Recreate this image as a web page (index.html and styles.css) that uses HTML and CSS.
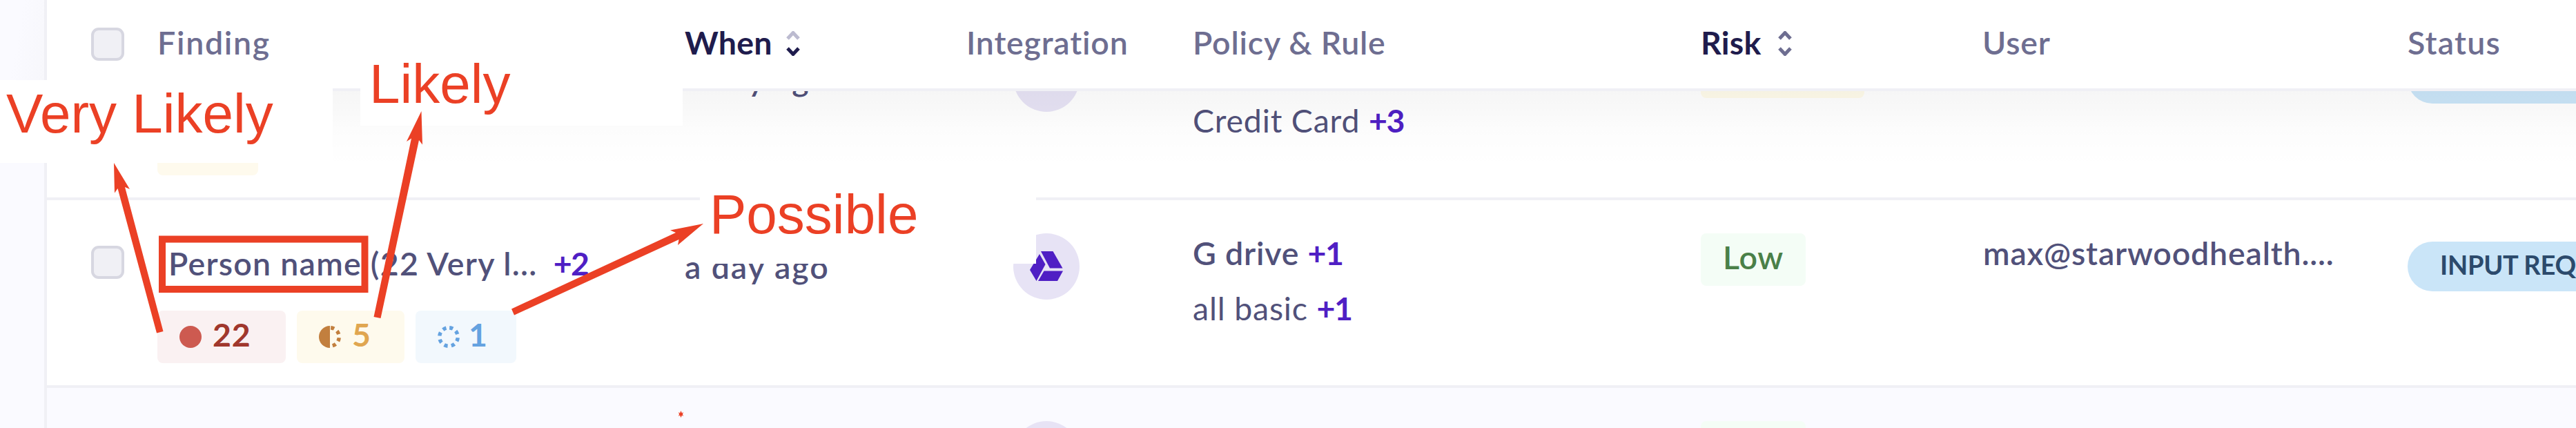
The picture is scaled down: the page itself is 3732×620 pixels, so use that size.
FILE: index.html
```html
<!DOCTYPE html>
<html lang="en">
<head>
<meta charset="utf-8">
<title>Findings</title>
<link rel="stylesheet" href="styles.css">
</head>
<body>
<div class="page">
  <aside class="rail"></aside>
  <main class="table">
    <header class="grid head">
      <span class="check"></span>
      <span class="th th-finding">Finding</span>
      <span class="th th-active">When
        <svg class="sort" viewBox="0 0 20 36"><path class="dim" d="M2 11 10 2.500 18 11"/><path class="dark" d="M2 25 10 33.500 18 25"/></svg>
      </span>
      <span class="th">Integration</span>
      <span class="th">Policy &amp; Rule</span>
      <span class="th th-active th-risk">Risk
        <svg class="sort" viewBox="0 0 20 36"><path d="M2 11 10 2.500 18 11"/><path d="M2 25 10 33.500 18 25"/></svg>
      </span>
      <span class="th">User</span>
      <span class="th th-status">Status</span>
    </header>
    <div class="shade"></div>
    <section class="rows">
      <div class="grid row">
        <span></span>
        <div class="finding">
          <div class="title"></div>
          <div class="tags"><span class="tag tag-likely tag-blank"></span></div>
        </div>
        <div class="when">a day ago</div>
        <div class="integration"><span class="disc"></span></div>
        <div class="policy"><div class="rule-name"></div><div class="rule">Credit Card <b>+3</b></div></div>
        <div><span class="risk risk-medium"></span></div>
        <div></div>
        <div><span class="pill"></span></div>
      </div>
      <div class="grid row">
        <span class="check"></span>
        <div class="finding">
          <div class="title"><span class="name">Person name (22 Very l...</span><b>+2</b></div>
          <div class="tags">
            <span class="tag tag-very"><svg class="dot" viewBox="-16 -16 32 32"><circle r="16" fill="#cd5a50"/></svg>22</span>
            <span class="tag tag-likely"><svg class="dot" viewBox="-16 -16 32 32"><path d="M0-16A16 16 0 0 0 0 16Z" fill="#c27f3e"/><circle r="13.300" fill="none" stroke="#c27f3e" stroke-width="5.400" stroke-dasharray="5.200 5.250 5.200 5.250 5.200 5.250 5.200 100" transform="rotate(-85)"/></svg>5</span>
            <span class="tag tag-possible"><svg class="dot" viewBox="-16 -16 32 32"><circle r="13.300" fill="none" stroke="#64a2e0" stroke-width="5.400" stroke-dasharray="5.200 5.246" transform="rotate(-85)"/></svg>1</span>
          </div>
        </div>
        <div class="when">a day ago</div>
        <div class="integration"><span class="disc">
          <svg viewBox="0 0 96 96" fill="#4f1fc4"><path d="M38 30 46.500 45 33.500 69 24 53Z"/><path d="M40 26H57.500L71.500 50.500H53Z"/><path d="M44.500 54.500H72L64 69H36Z"/></svg>
        </span></div>
        <div class="policy"><div class="rule-name">G drive <b>+1</b></div><div class="rule">all basic <b>+1</b></div></div>
        <div><span class="risk risk-low">Low</span></div>
        <div class="user">max@starwoodhealth....</div>
        <div><span class="pill">INPUT REQ</span></div>
      </div>
      <div class="grid row row-alt">
        <span></span><div></div><div></div>
        <div class="integration"><span class="disc"></span></div>
        <div></div>
        <div><span class="risk risk-low"></span></div>
        <div></div><div></div>
      </div>
    </section>
  </main>

  <div class="note note-likely">Likely</div>
  <div class="note note-very">Very Likely</div>
  <div class="note note-possible">Possible</div>
  <svg class="marks" viewBox="0 0 3732 620" fill="#eb4025">
    <path d="M165 236 188 274 181 271 236.500 480 227 482.500 170.500 273 166 279.500Z"/>
    <path d="M610.500 161 612 209.500 607 203 551.500 461 541.500 459 596 200.500 589 205Z"/>
    <path d="M1019 324 982 355 983.500 347 745 456.500 741 447.500 979 337 971 333.500Z"/>
    <rect x="235" y="346.500" width="293.500" height="72.500" fill="none" stroke="#eb4025" stroke-width="10"/>
    <path d="M986.500 595 988 598.500 990 597 989 600 990 603 988 601.500 986.500 605 985 601.500 983 603 984 600 983 597 985 598.500Z"/>
  </svg>
</div>
</body>
</html>
```
FILE: styles.css
```css
* { box-sizing: border-box; }

body {
  margin: 0;
  font: 600 46.500px/56px Lato, "Open Sans", sans-serif;
  letter-spacing: .8px;
  color: #51517a;
  background: #fff;
}

.page {
  position: relative;
  display: flex;
  width: 3732px;
  height: 620px;
  overflow: hidden;
}

.rail {
  flex: none;
  width: 68px;
  border-right: 4px solid #f0f0f5;
  background: linear-gradient(100deg, #fafaff 40%, #f7f7fb) top / 100% 130px no-repeat, #fafaff;
}

.table {
  position: relative;
  flex: none;
  width: 3664px;
}

.grid {
  display: grid;
  grid-template-columns: 96px 764px 408px 328px 736px 408px 616px 244px;
  padding-left: 64px;
}

.head {
  position: relative;
  z-index: 2;
  height: 132px;
  align-items: center;
  border-bottom: 4px solid #f0f0f5;
  background: #fff;
}

.th {
  display: flex;
  align-items: center;
  gap: 20px;
  padding-bottom: 7px;
  color: #6e6e91;
  white-space: nowrap;
}
.th-finding { letter-spacing: 1.700px; }
.th-active { color: #1f1c4d; font-weight: 700; letter-spacing: .2px; }
.th-risk { gap: 25px; }
.th-status { letter-spacing: 1.200px; }

.sort {
  width: 20px;
  height: 36px;
  margin-top: 5px;
  fill: none;
  stroke: #6e6e91;
  stroke-width: 5;
}
.sort .dim { stroke: #bcbbd0; }
.sort .dark { stroke: #1f1c4d; }

.check {
  width: 48px;
  height: 48px;
  border: 4px solid #d7d7e1;
  border-radius: 11px;
  background: #f0f0f5;
}

/* soft shadow cast by the sticky header */
.shade {
  position: absolute;
  z-index: 1;
  top: 132px;
  left: 0;
  width: 100%;
  height: 112px;
  background: linear-gradient(rgba(0,0,0,.034), rgba(0,0,0,.028) 22%, rgba(0,0,0,.012) 50%, rgba(0,0,0,.003) 80%, transparent);
}

/* list scrolled under the header */
.rows { margin-top: -114px; }

.row {
  height: 272px;
  padding-top: 48px;
  border-bottom: 4px solid #f0f0f5;
  align-items: start;
  background: #fff;
  white-space: nowrap;
}
.row-alt { background: #fafaff; }
.row .check { margin-top: 18px; }

b { color: #4f1fc4; font-weight: 700; letter-spacing: -1.500px; }

.title {
  display: flex;
  gap: 23px;
  height: 112px;
  padding: 14px 0 0 16px;
  line-height: 59px;
}
.title .name { letter-spacing: 1.250px; }

.tags { display: flex; gap: 16px; }
.tag {
  display: flex;
  align-items: center;
  gap: 16px;
  height: 76px;
  padding-left: 32px;
  border-radius: 8px;
  line-height: 69px;
  padding-bottom: 7px;
  font-weight: 700;
}
.tag .dot { width: 32px; height: 32px; margin-top: 7px; }
.tag-very { width: 186px; background: #faf1f2; color: #a0372d; }
.tag-likely { width: 156px; background: #fefaed; color: #e0a650; }
.tag-possible { width: 146px; gap: 13px; background: #f2f8fd; color: #64a2e0; }
.tag-blank { width: 146px; }

.when { padding-top: 20px; letter-spacing: 1.900px; }

.integration { padding-left: 68px; }
.disc {
  display: block;
  width: 96px;
  height: 96px;
  border-radius: 50%;
  background: #e7e3f5;
}
.disc svg { display: block; width: 96px; height: 96px; }

.policy { line-height: 79px; margin-top: -11px; }
.rule-name, .rule { height: 80px; }
.rule { font-weight: 400; }

.risk {
  display: block;
  width: 152px;
  height: 76px;
  padding-left: 32px;
  border-radius: 8px;
  line-height: 68px;
}
.risk-low { background: #f4fdf6; color: #4a8048; }
.risk-medium { width: 237px; background: #fffbea; }

.user { padding-left: 1px; letter-spacing: .8px; }

.pill {
  display: block;
  width: 244px;
  height: 72px;
  margin-top: 12px;
  padding-left: 47px;
  border-radius: 36px 0 0 36px;
  background: #cae5f8;
  color: #2c4a6c;
  font-size: 38px;
  font-weight: 700;
  line-height: 67px;
  letter-spacing: -.3px;
}

/* annotation layer */
.note {
  position: absolute;
  z-index: 3;
  background: #fff;
  color: #eb4025;
  font: 400 80px/92px "Liberation Sans", Arial, sans-serif;
  letter-spacing: 0;
  white-space: nowrap;
}
.note-very { left: 0; top: 116px; width: 482px; height: 120px; padding: 3px 0 0 9px; }
.note-likely { left: 522px; top: 70px; width: 467px; height: 112px; padding: 6px 0 0 13px; }
.note-possible { left: 1014px; top: 250px; width: 487px; height: 132px; padding: 15px 0 0 14px; }

.marks {
  position: absolute;
  z-index: 4;
  left: 0;
  top: 0;
  width: 3732px;
  height: 620px;
}
```
